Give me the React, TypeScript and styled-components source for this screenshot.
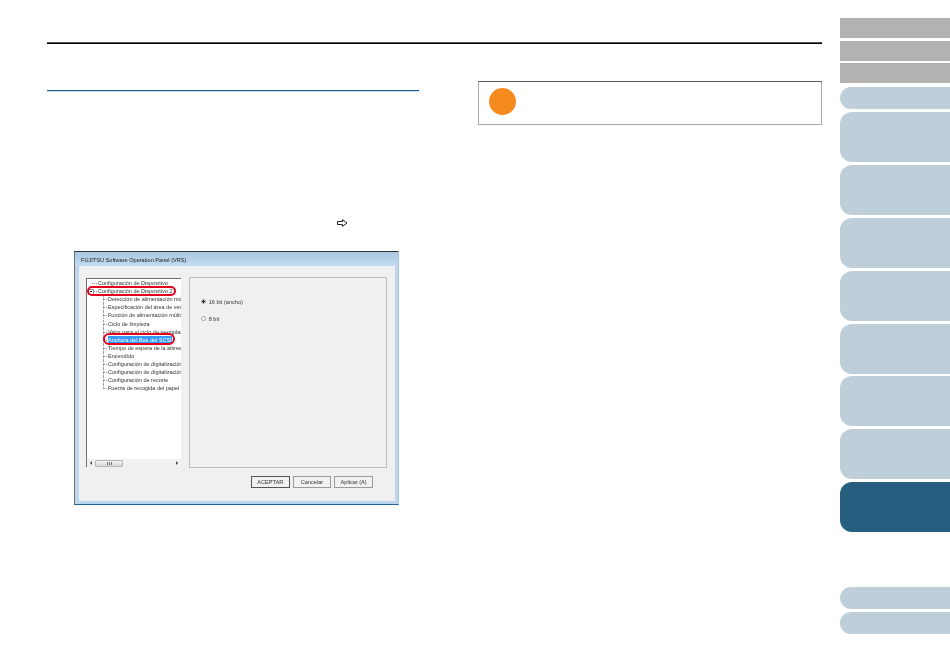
import React from 'react';
import styled, { createGlobalStyle } from 'styled-components';

const GlobalStyle = createGlobalStyle`
  html, body {
    margin: 0;
    padding: 0;
    background: #fff;
    font-family: "Liberation Sans", Arial, sans-serif;
  }
`;

const Page = styled.div`
  display: flex;
  align-items: flex-start;
  width: 950px;
  height: 671px;
  overflow: hidden;
`;

const Main = styled.main`
  width: 775px;
  margin: 42px 18px 0 47px;
  border-top: 1px solid #555;
  box-shadow: inset 0 1px 0 #000;
  flex: none;
`;

const Columns = styled.div`
  display: flex;
  gap: 59px;
  padding-top: 38px;
`;

const LeftColumn = styled.section`
  width: 372px;
  padding-top: 9px;
`;

const RightColumn = styled.section`
  width: 344px;
`;

const BlueRule = styled.div`
  height: 1px;
  background: #1f6391;
  box-shadow: 0 1px 0 #c5d8e6;
`;

const ArrowLine = styled.div`
  display: flex;
  justify-content: flex-end;
  margin: 128px 71px 0 0;
  height: 8px;
`;

const Dialog = styled.div`
  width: 325px;
  height: 254px;
  margin: 24px 0 0 27px;
  box-sizing: border-box;
  display: flex;
  flex-direction: column;
  background: #bcd6ee;
  border-top: 1px solid #2a3338;
  border-left: 1px solid #6d7478;
  border-bottom: 1px solid #1f6391;
  border-right: 1px solid #a8c6e2;
  filter: blur(0.35px);
`;

const TitleBar = styled.div`
  height: 13px;
  padding: 1px 0 0 6px;
  flex: none;
  display: flex;
  align-items: center;
  background: linear-gradient(#a9c6e2, #c4dcf1);
  color: #222;
  font-size: 5.6px;
  white-space: nowrap;
`;

const DialogBody = styled.div`
  flex: 1;
  margin: 0 3px 3px 4px;
  background: #f0f0f0;
  padding: 11px 8px 0 7px;
  display: flex;
  flex-direction: column;
`;

const Panes = styled.div`
  display: flex;
  gap: 8px;
  align-items: flex-start;
`;

const TreePane = styled.div`
  position: relative;
  width: 95px;
  height: 189px;
  margin-top: 1px;
  box-sizing: border-box;
  border-top: 1px solid #6e6e6e;
  border-left: 1px solid #6e6e6e;
  background: #fff;
  display: flex;
  flex-direction: column;
  overflow: hidden;
`;

const TreeList = styled.ul`
  list-style: none;
  margin: 0;
  padding: 0;
  flex: 1;
`;

const TreeRow = styled.li<{ $level: number; $last?: boolean }>`
  position: relative;
  height: 8.12px;
  line-height: 8.12px;
  font-size: 5.5px;
  color: #333;
  white-space: nowrap;
  padding-left: ${({ $level }) => ($level === 0 ? 11 : 21)}px;

  &::before {
    content: '';
    position: absolute;
    top: 4px;
    left: ${({ $level }) => ($level === 0 ? 5 : 16)}px;
    width: ${({ $level }) => ($level === 0 ? 5 : 4)}px;
    border-top: 1px dotted #999;
  }

  &::after {
    content: '';
    position: absolute;
    top: 0;
    left: 16px;
    height: ${({ $last }) => ($last ? 4 : 8)}px;
    border-left: ${({ $level }) => ($level === 0 ? 'none' : '1px dotted #999')};
  }
`;

const RowLabel = styled.span<{ $selected?: boolean }>`
  position: relative;
  z-index: 1;
  background: ${({ $selected }) => ($selected ? '#3399ff' : 'transparent')};
  color: ${({ $selected }) => ($selected ? '#fff' : 'inherit')};
  padding: ${({ $selected }) => ($selected ? '1px 0' : '0')};
`;

const Expander = styled.span`
  position: absolute;
  z-index: 1;
  left: 1px;
  top: 1.5px;
  width: 4px;
  height: 4px;
  border: 1px solid #9a9a9a;
  background: #fff;

  &::after {
    content: '';
    position: absolute;
    left: 1px;
    top: 1.5px;
    width: 2px;
    height: 1px;
    background: #333;
  }
`;

const RedRing = styled.span<{ $left: number; $width: number; $top: number; $height: number }>`
  position: absolute;
  z-index: 2;
  left: ${({ $left }) => $left}px;
  top: ${({ $top }) => $top}px;
  width: ${({ $width }) => $width}px;
  height: ${({ $height }) => $height}px;
  box-sizing: border-box;
  border: 2px solid #e3001b;
  border-radius: 6px;
`;

const HScroll = styled.div`
  height: 8px;
  flex: none;
  display: flex;
  align-items: center;
  justify-content: space-between;
  padding: 0 3px;
  background: #f2f2f2;
  box-sizing: border-box;
`;

const ScrollThumb = styled.div`
  width: 28px;
  height: 7px;
  margin: 0 auto 0 3px;
  box-sizing: border-box;
  border: 1px solid #b5b5b5;
  background: linear-gradient(#f4f4f4, #d4d4d4);
  border-radius: 1px;
  display: flex;
  align-items: center;
  justify-content: center;
  gap: 1px;
`;

const GripTick = styled.span`
  width: 1px;
  height: 3px;
  background: #777;
`;

const ScrollArrow = styled.span<{ $dir: 'left' | 'right' }>`
  width: 0;
  height: 0;
  border-top: 2px solid transparent;
  border-bottom: 2px solid transparent;
  ${({ $dir }) => ($dir === 'left' ? 'border-right: 2px solid #444;' : 'border-left: 2px solid #444;')}
`;

const OptionsPanel = styled.div`
  width: 199px;
  height: 191px;
  box-sizing: border-box;
  border: 1px solid #bdbdbd;
  padding: 20px 0 0 11px;
  display: flex;
  flex-direction: column;
  gap: 9.5px;
`;

const RadioRow = styled.label`
  display: flex;
  align-items: center;
  gap: 3px;
  height: 7.5px;
  font-size: 5.6px;
  color: #333;
`;

const RadioDot = styled.span<{ $checked?: boolean }>`
  width: 5px;
  height: 5px;
  flex: none;
  box-sizing: border-box;
  border: 1px solid #a0a0a0;
  border-radius: 50%;
  background: ${({ $checked }) => ($checked ? 'radial-gradient(circle, #222 0 1.2px, #fff 1.4px)' : '#fff')};
`;

const ButtonRow = styled.div`
  display: flex;
  gap: 3.2px;
  margin: 8px 0 0 165px;
`;

const DialogButton = styled.button<{ $primary?: boolean }>`
  width: 38.5px;
  height: 12px;
  padding: 0;
  box-sizing: border-box;
  font-family: inherit;
  font-size: 5.6px;
  color: #333;
  background: #f1f1f1;
  border: 1px solid ${({ $primary }) => ($primary ? '#555' : '#9a9a9a')};
  border-radius: 0;
`;

const Callout = styled.div`
  height: 44px;
  box-sizing: border-box;
  border: 1px solid #a8a8a8;
  border-top-color: #555;
  padding: 0 0 4px 10px;
  display: flex;
  align-items: center;
`;

const OrangeDot = styled.div`
  width: 27px;
  height: 27px;
  border-radius: 50%;
  background: #f58a1f;
`;

const Sidebar = styled.nav`
  width: 110px;
  flex: none;
  margin-top: 18px;
  display: flex;
  flex-direction: column;
`;

const GrayGroup = styled.div`
  display: flex;
  flex-direction: column;
  gap: 2.5px;
  margin-bottom: 4px;
`;

const GrayTab = styled.div`
  height: 20px;
  background: #b2b2b2;
`;

const ShortTab = styled.div`
  height: 22px;
  margin-bottom: 3px;
  background: #bfcfda;
  border-radius: 11px 0 0 11px;
`;

const TallTab = styled.div<{ $active?: boolean }>`
  height: 50px;
  margin-bottom: 2.9px;
  background: ${({ $active }) => ($active ? '#255e7e' : '#bfcfda')};
  border-radius: 12px 0 0 12px;
`;

const Gap = styled.div`
  height: 52px;
`;

const treeItems = [
  { label: 'Detección de alimentación múltiple' },
  { label: 'Especificación del área de verificación' },
  { label: 'Función de alimentación múltiple' },
  { label: 'Ciclo de limpieza' },
  { label: 'Valor para el ciclo de reemplazo' },
  { label: 'Anchura del Bus del SCSI', selected: true },
  { label: 'Tiempo de espera de la alimentación' },
  { label: 'Encendido' },
  { label: 'Configuración de digitalización' },
  { label: 'Configuración de digitalización' },
  { label: 'Configuración de recorte' },
  { label: 'Fuerza de recogida del papel' },
];

const tallTabs = [0, 1, 2, 3, 4, 5, 6];

export default function App() {
  return (
    <Page>
      <GlobalStyle />
      <Main>
        <Columns>
          <LeftColumn>
            <BlueRule />
            <ArrowLine>
              <svg width="11" height="8" viewBox="0 0 11 8">
                <path d="M0.5 2.5H5.5V0.7L10 4L5.5 7.3V5.5H0.5Z" fill="#fff" stroke="#222" strokeWidth="1" />
              </svg>
            </ArrowLine>
            <Dialog>
              <TitleBar>FUJITSU Software Operation Panel (VRS)</TitleBar>
              <DialogBody>
                <Panes>
                  <TreePane>
                    <TreeList>
                      <TreeRow $level={0}>Configuración de Dispositivo</TreeRow>
                      <TreeRow $level={0}>
                        <Expander />
                        Configuración de Dispositivo 2
                        <RedRing $left={0} $width={89} $top={-1} $height={10} />
                      </TreeRow>
                      {treeItems.map((item, i) => (
                        <TreeRow key={i} $level={1} $last={i === treeItems.length - 1}>
                          <RowLabel $selected={item.selected}>{item.label}</RowLabel>
                          {item.selected && <RedRing $left={16} $width={72} $top={-3} $height={12} />}
                        </TreeRow>
                      ))}
                    </TreeList>
                    <HScroll>
                      <ScrollArrow $dir="left" />
                      <ScrollThumb>
                        <GripTick />
                        <GripTick />
                        <GripTick />
                      </ScrollThumb>
                      <ScrollArrow $dir="right" />
                    </HScroll>
                  </TreePane>
                  <OptionsPanel>
                    <RadioRow>
                      <RadioDot $checked />
                      16 bit (ancho)
                    </RadioRow>
                    <RadioRow>
                      <RadioDot />
                      8 bit
                    </RadioRow>
                  </OptionsPanel>
                </Panes>
                <ButtonRow>
                  <DialogButton $primary>ACEPTAR</DialogButton>
                  <DialogButton>Cancelar</DialogButton>
                  <DialogButton>Aplicar (A)</DialogButton>
                </ButtonRow>
              </DialogBody>
            </Dialog>
          </LeftColumn>
          <RightColumn>
            <Callout>
              <OrangeDot />
            </Callout>
          </RightColumn>
        </Columns>
      </Main>
      <Sidebar>
        <GrayGroup>
          <GrayTab />
          <GrayTab />
          <GrayTab />
        </GrayGroup>
        <ShortTab />
        {tallTabs.map((t) => (
          <TallTab key={t} />
        ))}
        <TallTab $active />
        <Gap />
        <ShortTab />
        <ShortTab />
      </Sidebar>
    </Page>
  );
}
